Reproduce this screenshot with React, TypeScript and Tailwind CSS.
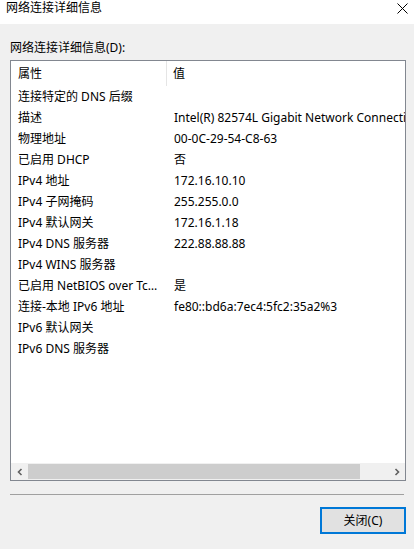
import React from 'react';

type Row = { name: string; value: string };

const rows: Row[] = [
  { name: '连接特定的 DNS 后缀', value: '' },
  { name: '描述', value: 'Intel(R) 82574L Gigabit Network Connection' },
  { name: '物理地址', value: '00-0C-29-54-C8-63' },
  { name: '已启用 DHCP', value: '否' },
  { name: 'IPv4 地址', value: '172.16.10.10' },
  { name: 'IPv4 子网掩码', value: '255.255.0.0' },
  { name: 'IPv4 默认网关', value: '172.16.1.18' },
  { name: 'IPv4 DNS 服务器', value: '222.88.88.88' },
  { name: 'IPv4 WINS 服务器', value: '' },
  { name: '已启用 NetBIOS over Tcpip', value: '是' },
  { name: '连接-本地 IPv6 地址', value: 'fe80::bd6a:7ec4:5fc2:35a2%3' },
  { name: 'IPv6 默认网关', value: '' },
  { name: 'IPv6 DNS 服务器', value: '' },
];

const font = { fontFamily: '"Noto Sans", "Noto Sans CJK SC", sans-serif' };

const App: React.FC = () => {
  return (
    <div className="w-[414px] h-[549px] bg-[#f0f0f0] text-[12px] text-black overflow-hidden" style={font}>
      {/* title bar */}
      <div className="h-[24px] bg-white flex items-start justify-between pl-[6px] pr-[6px]">
        <span className="leading-[16px] mt-[0px]">网络连接详细信息</span>
        <svg width="11" height="11" viewBox="0 0 11 11" className="mt-[3px]">
          <path d="M0.5 0.5 L10.5 10.5 M10.5 0.5 L0.5 10.5" stroke="#000" strokeWidth="1" fill="none" />
        </svg>
      </div>

      <div className="pl-[10px] pr-[8px]">
        <div className="mt-[16px] leading-[16px]">网络连接详细信息(D):</div>

        {/* list view */}
        <div className="mt-[4px] h-[421px] border border-[#828790] bg-white flex flex-col">
          <div className="h-[25px] flex items-center shrink-0">
            <div className="w-[156px] pl-[7px] h-full flex items-center border-r border-[#e5e5e5]">属性</div>
            <div className="pl-[6px]">值</div>
          </div>
          <div className="flex-1 overflow-hidden">
            {rows.map((r) => (
              <div key={r.name} className="h-[21px] flex items-center whitespace-nowrap">
                <div className="w-[156px] pl-[7px] pr-[4px] overflow-hidden text-ellipsis">{r.name}</div>
                <div className="pl-[7px] flex-1 overflow-hidden">{r.value}</div>
              </div>
            ))}
          </div>
          {/* horizontal scrollbar */}
          <div className="h-[17px] flex bg-[#f0f0f0] shrink-0">
            <div className="w-[17px] flex items-center justify-center">
              <svg width="8" height="8" viewBox="0 0 8 8">
                <path d="M5.5 1 L2.5 4 L5.5 7" stroke="#606060" strokeWidth="1.6" fill="none" />
              </svg>
            </div>
            <div className="w-[332px] my-[1px] bg-[#cdcdcd]" />
            <div className="flex-1" />
            <div className="w-[17px] flex items-center justify-center">
              <svg width="8" height="8" viewBox="0 0 8 8">
                <path d="M2.5 1 L5.5 4 L2.5 7" stroke="#606060" strokeWidth="1.6" fill="none" />
              </svg>
            </div>
          </div>
        </div>

        <div className="mt-[13px] h-px bg-[#a0a0a0] mr-[2px]" />

        <div className="flex justify-end mt-[12px]">
          <button className="w-[86px] h-[27px] border-2 border-[#0078d7] bg-[#e1e1e1] flex items-center justify-center leading-none">
            关闭(C)
          </button>
        </div>
      </div>
    </div>
  );
};

export default App;
